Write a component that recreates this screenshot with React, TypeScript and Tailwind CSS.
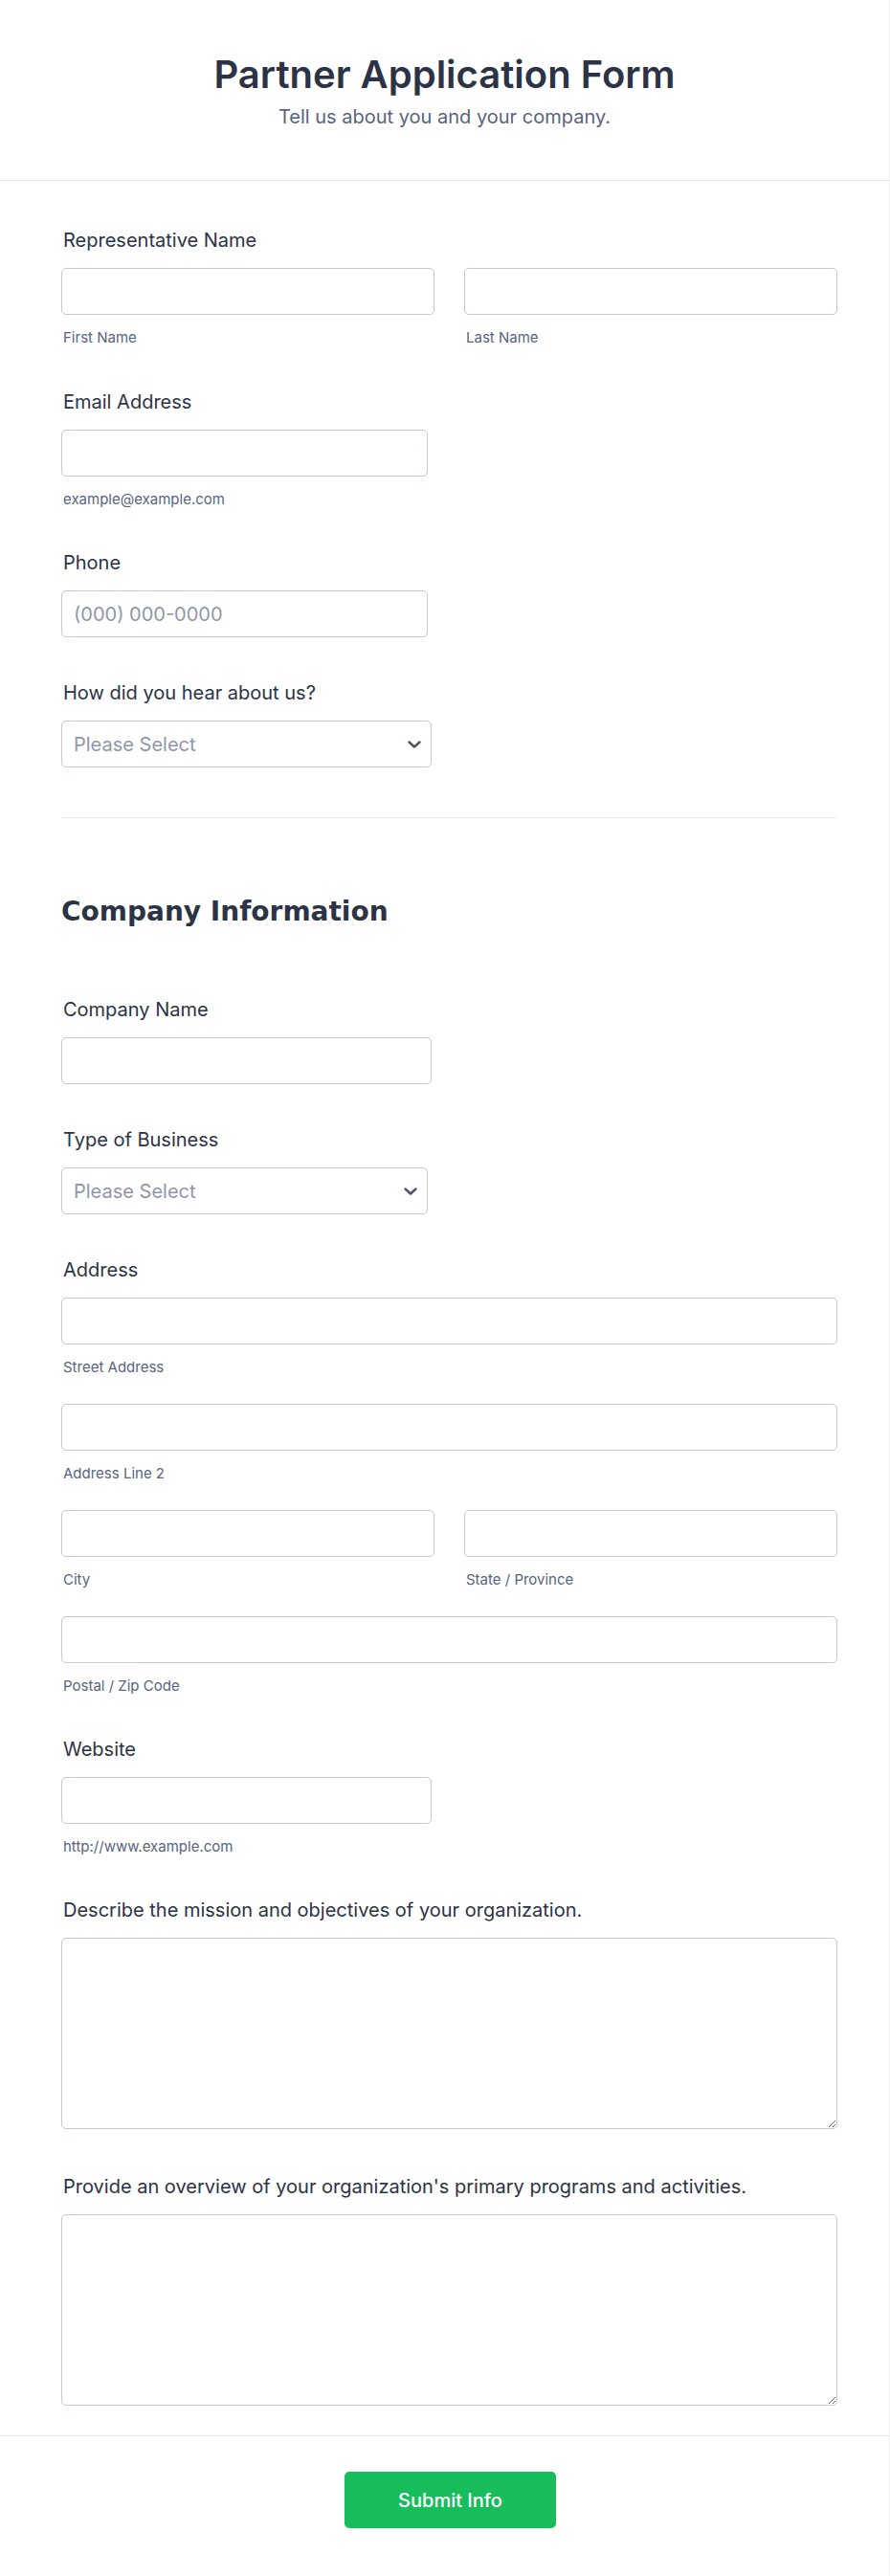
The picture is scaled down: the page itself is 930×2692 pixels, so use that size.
import React from 'react';

const inputCls =
  'block h-[49px] rounded-[5px] border border-[#c3c8d4] bg-white px-3 text-[20px] text-[#2c3345] placeholder:text-[#8f97a8] outline-none';

function Label({ children }: { children: React.ReactNode }) {
  return (
    <div className="pl-[2px] text-[20px] leading-[24px] font-normal text-[#2c3345]">{children}</div>
  );
}

function SubLabel({ children }: { children: React.ReactNode }) {
  return <div className="mt-[15px] pl-[2px] text-[15px] leading-[18px] text-[#57647e]">{children}</div>;
}

function Chevron() {
  return (
    <svg
      className="pointer-events-none absolute right-[11px] top-1/2 -translate-y-1/2"
      width="14"
      height="8"
      viewBox="0 0 14 8"
      fill="none"
      aria-hidden
    >
      <path d="M1.5 1.5L7 6.5L12.5 1.5" stroke="#4b5568" strokeWidth="2.4" strokeLinecap="round" strokeLinejoin="round" />
    </svg>
  );
}

function Select({ width }: { width: string }) {
  return (
    <div className={`relative mt-[17px] ${width}`}>
      <select
        defaultValue=""
        className="block h-[49px] w-full appearance-none rounded-[5px] border border-[#c3c8d4] bg-white pl-3 pr-8 text-[20px] text-[#8f97a8] outline-none"
      >
        <option value="">Please Select</option>
      </select>
      <Chevron />
    </div>
  );
}

export default function App() {
  return (
    <div className="w-[930px] border-r border-[#eef0f3] bg-white font-['Inter',sans-serif]">
      <header className="border-b border-[#e3e5ee] pt-[54px] pb-[54px] text-center">
        <h1 className="text-[40px] leading-[48px] font-semibold text-[#2c3345]">Partner Application Form</h1>
        <p className="mt-[8px] text-[20px] leading-[24px] text-[#57647e]">Tell us about you and your company.</p>
      </header>

      <main className="pl-[64px] pr-[54px] pt-[50px] pb-[31px]">
        {/* Representative name */}
        <section>
          <Label>Representative Name</Label>
          <div className="mt-[17px] grid grid-cols-2 gap-x-[31px]">
            <div>
              <input type="text" className={`${inputCls} w-full`} />
              <SubLabel>First Name</SubLabel>
            </div>
            <div>
              <input type="text" className={`${inputCls} w-full`} />
              <SubLabel>Last Name</SubLabel>
            </div>
          </div>
        </section>

        <section className="mt-[46px]">
          <Label>Email Address</Label>
          <input type="email" className={`${inputCls} mt-[17px] w-[383px]`} />
          <SubLabel>example@example.com</SubLabel>
        </section>

        <section className="mt-[45px]">
          <Label>Phone</Label>
          <input type="tel" placeholder="(000) 000-0000" className={`${inputCls} mt-[17px] w-[383px]`} />
        </section>

        <section className="mt-[46px]">
          <Label>How did you hear about us?</Label>
          <Select width="w-[387px]" />
        </section>

        <div className="mt-[52px] h-px bg-[#e8e9ee]" />

        <h2 className="mt-[82px] font-['DejaVu_Sans',Verdana,sans-serif] text-[28px] leading-[32px] font-bold text-[#2c3345]">
          Company Information
        </h2>

        <section className="mt-[74px]">
          <Label>Company Name</Label>
          <input type="text" className={`${inputCls} mt-[17px] w-[387px]`} />
        </section>

        <section className="mt-[46px]">
          <Label>Type of Business</Label>
          <Select width="w-[383px]" />
        </section>

        <section className="mt-[46px]">
          <Label>Address</Label>
          <input type="text" className={`${inputCls} mt-[17px] w-full`} />
          <SubLabel>Street Address</SubLabel>
          <input type="text" className={`${inputCls} mt-[29px] w-full`} />
          <SubLabel>Address Line 2</SubLabel>
          <div className="mt-[29px] grid grid-cols-2 gap-x-[31px]">
            <div>
              <input type="text" className={`${inputCls} w-full`} />
              <SubLabel>City</SubLabel>
            </div>
            <div>
              <input type="text" className={`${inputCls} w-full`} />
              <SubLabel>State / Province</SubLabel>
            </div>
          </div>
          <input type="text" className={`${inputCls} mt-[29px] w-full`} />
          <SubLabel>Postal / Zip Code</SubLabel>
        </section>

        <section className="mt-[45px]">
          <Label>Website</Label>
          <input type="url" className={`${inputCls} mt-[17px] w-[387px]`} />
          <SubLabel>http://www.example.com</SubLabel>
        </section>

        <section className="mt-[45px]">
          <Label>Describe the mission and objectives of your organization.</Label>
          <textarea className="mt-[17px] block h-[200px] w-full rounded-[5px] border border-[#c3c8d4] bg-white px-3 py-2 text-[20px] text-[#2c3345] outline-none" />
        </section>

        <section className="mt-[48px]">
          <Label>Provide an overview of your organization's primary programs and activities.</Label>
          <textarea className="mt-[17px] block h-[200px] w-full rounded-[5px] border border-[#c3c8d4] bg-white px-3 py-2 text-[20px] text-[#2c3345] outline-none" />
        </section>
      </main>

      <footer className="flex justify-center border-t border-[#e3e5ee] pl-[12px] pt-[37px] pb-[50px]">
        <button
          type="button"
          className="h-[59px] w-[221px] rounded-[5px] bg-[#18bd5b] text-[20px] font-medium text-white"
        >
          Submit Info
        </button>
      </footer>
    </div>
  );
}
